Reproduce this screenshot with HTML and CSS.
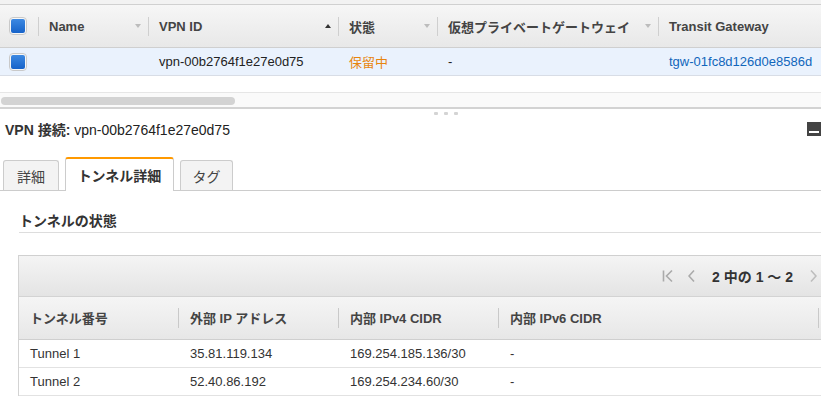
FILE: index.html
```html
<!DOCTYPE html>
<html lang="ja">
<head>
  <meta charset="UTF-8" />
  <meta name="viewport" content="width=device-width, initial-scale=1" />
  <title>VPN 接続 | トンネル詳細</title>
  <link rel="stylesheet" href="styles.css">
</head>
<body>

  <div class="topbar"></div>

  <div class="list">
    <div class="list-head">
      <div class="col col-check"><span class="cb"><span></span></span></div>
      <div class="col col-name">Name<span class="sort"></span></div>
      <div class="col col-id">VPN ID<span class="sort up"></span></div>
      <div class="col col-state">状態<span class="sort"></span></div>
      <div class="col col-vgw">仮想プライベートゲートウェイ<span class="sort"></span></div>
      <div class="col col-tgw">Transit Gateway</div>
    </div>
    <div class="list-row">
      <div class="col col-check"><span class="cb"><span></span></span></div>
      <div class="col col-name"></div>
      <div class="col col-id">vpn-00b2764f1e27e0d75</div>
      <div class="col col-state pending">保留中</div>
      <div class="col col-vgw">-</div>
      <div class="col col-tgw"><a href="#" class="link">tgw-01fc8d126d0e8586d</a></div>
    </div>
    <div class="list-gap"></div>
    <div class="hscroll"><div class="thumb"></div></div>
  </div>

  <div class="splitter"><span></span><span></span><span></span></div>

  <div class="detail-head">
    <span><b>VPN 接続:</b> vpn-00b2764f1e27e0d75</span>
    <svg class="max-icon" width="14" height="14" viewBox="0 0 14 14">
      <rect width="14" height="14" fill="#444" />
      <rect x="2" y="9" width="10" height="2" fill="#fff" />
    </svg>
  </div>

  <div class="tabs">
    <div class="tab tab-1">詳細</div>
    <div class="tab tab-2 active">トンネル詳細</div>
    <div class="tab tab-3">タグ</div>
  </div>

  <section class="tunnels">
    <h2>トンネルの状態</h2>

    <div class="tbl">
      <div class="pager">
        <svg class="pg-first" width="11" height="14" viewBox="0 0 11 14">
          <path d="M1.5 1.5v11M10 1.5 4.5 7 10 12.5" fill="none" stroke="#aaaaaa" stroke-width="1.6" />
        </svg>
        <svg class="pg-prev" width="7" height="14" viewBox="0 0 7 14">
          <path d="M6 1.5 1 7l5 5.5" fill="none" stroke="#aaaaaa" stroke-width="1.6" />
        </svg>
        <span class="pg-text">2 中の 1 〜 2</span>
        <svg class="pg-next" width="7" height="14" viewBox="0 0 7 14">
          <path d="M1 1.5 6 7l-5 5.5" fill="none" stroke="#bdbdbd" stroke-width="1.6" />
        </svg>
      </div>

      <table>
        <colgroup>
          <col class="w160"><col class="w160"><col class="w160"><col class="w320"><col>
        </colgroup>
        <thead>
          <tr>
            <th>トンネル番号</th>
            <th>外部 IP アドレス</th>
            <th>内部 IPv4 CIDR</th>
            <th>内部 IPv6 CIDR</th>
            <th class="last"></th>
          </tr>
        </thead>
        <tbody>
          <tr>
            <td>Tunnel 1</td>
            <td>35.81.119.134</td>
            <td>169.254.185.136/30</td>
            <td>-</td>
            <td></td>
          </tr>
          <tr>
            <td>Tunnel 2</td>
            <td>52.40.86.192</td>
            <td>169.254.234.60/30</td>
            <td>-</td>
            <td></td>
          </tr>
        </tbody>
      </table>
    </div>
  </section>

</body>
</html>
```

FILE: styles.css
```css
* {
  box-sizing: border-box;
  margin: 0;
  padding: 0;
}

body {
  font-family: "Liberation Sans", "Noto Sans CJK JP", sans-serif;
  font-size: 13px;
  color: #333;
  background: #fff;
  width: 821px;
  height: 398px;
  overflow: hidden;
}

.topbar {
  height: 4px;
  background: #f2f2f2;
}

/* list of vpn connections */
.list-head {
  display: flex;
  height: 44px;
  border-top: 1px solid #d0d0d0;
  border-bottom: 1px solid #cfcfcf;
  background: linear-gradient(#f6f6f6, #e8e8e8);
  font-weight: bold;
  color: #444;
}

.col {
  display: flex;
  align-items: center;
  flex: none;
  white-space: nowrap;
  padding: 0 7px 0 11px;
  background: linear-gradient(#cfcfcf, #cfcfcf) no-repeat left center / 1px 19px;
}

.col-check {
  width: 38px;
  padding: 0 0 0 9px;
  background: none;
}
.col-name { width: 110px; }
.col-id { width: 190px; }
.col-state { width: 99px; }
.col-vgw { width: 221px; }
.col-tgw { flex: 1; }

.sort {
  margin-left: auto;
  width: 0;
  height: 0;
  border-left: 3.5px solid transparent;
  border-right: 3.5px solid transparent;
  border-top: 4px solid #bcbcbc;
}
.sort.up {
  border-top: 0;
  border-bottom: 4px solid #333;
}

.cb {
  display: flex;
  align-items: center;
  justify-content: center;
  width: 18px;
  height: 18px;
  border: 1px solid #c9c9c9;
  border-radius: 4px;
  background: #f7f7f7;
}
.cb span {
  width: 14px;
  height: 14px;
  border-radius: 2px;
  background: linear-gradient(#3d89e2, #1763c9);
}

.list-row {
  display: flex;
  height: 28px;
  background: #eaf2fd;
  border-bottom: 1px solid #d8dde6;
  color: #222;
}
.list-row .col {
  background: none;
}

.pending {
  color: #e8850e;
}

.link {
  color: #1166bb;
  text-decoration: none;
}

.list-gap {
  height: 16px;
}

.hscroll {
  height: 17px;
  padding: 4px 0 0 1px;
  background: #fafafa;
  border-top: 1px solid #e6e6e6;
  border-bottom: 2px solid #d3d3d3;
}
.hscroll .thumb {
  width: 234px;
  height: 8px;
  border-radius: 4px;
  background: #d3d3d3;
}

/* detail pane */
.splitter {
  display: flex;
  gap: 6px;
  height: 9px;
  padding: 3px 0 0 434px;
}
.splitter span {
  width: 4px;
  height: 3px;
  border-radius: 1px;
  background: #d4d4d4;
}

.detail-head {
  display: flex;
  align-items: center;
  justify-content: space-between;
  height: 22px;
  padding-left: 5px;
  font-size: 14px;
  color: #222;
}
.detail-head b {
  color: #333;
}

.tabs {
  display: flex;
  align-items: flex-end;
  gap: 6px;
  height: 34px;
  margin-top: 17px;
  padding-left: 3px;
  border-bottom: 1px solid #cccccc;
}

.tab {
  display: flex;
  align-items: center;
  justify-content: center;
  height: 30px;
  border: 1px solid #cccccc;
  border-bottom: 0;
  border-radius: 3px 3px 0 0;
  background: #f3f3f3;
  font-size: 14px;
  color: #444;
}
.tab-1 { width: 56px; }
.tab-2 { width: 109px; }
.tab-3 { width: 53px; }

.tab.active {
  height: 34px;
  margin-bottom: -1px;
  background: #fff;
  border-top: 2px solid #ff9900;
  font-weight: bold;
  color: #333;
}

.tunnels {
  padding-left: 18px;
}

.tunnels h2 {
  margin: 20px 0 0 1px;
  padding-bottom: 1px;
  font-size: 14px;
  line-height: 20px;
  color: #333;
  border-bottom: 1px solid #dddddd;
}

.tbl {
  margin: 22px -14px 0 0;
  border-left: 1px solid #d3d3d3;
  border-top: 1px solid #d0d0d0;
}

.pager {
  display: flex;
  align-items: center;
  justify-content: flex-end;
  height: 41px;
  padding-right: 18px;
  background: linear-gradient(#f4f4f4, #e4e4e4);
  border-bottom: 1px solid #d3d3d3;
}
.pg-prev {
  margin-left: 15px;
}
.pg-text {
  margin: 0 17px;
  font-size: 14px;
  font-weight: bold;
  color: #333;
}

table {
  width: 100%;
  border-collapse: collapse;
  table-layout: fixed;
}
.w160 { width: 160px; }
.w320 { width: 320px; }

th {
  height: 42px;
  padding-left: 11px;
  text-align: left;
  white-space: nowrap;
  font-weight: bold;
  color: #444;
  border-bottom: 1px solid #cfcfcf;
  background:
    linear-gradient(#c9c9c9, #c9c9c9) no-repeat right center / 1px 20px,
    linear-gradient(#f5f5f5, #e7e7e7);
}
th.last {
  background: linear-gradient(#f5f5f5, #e7e7e7);
}

td {
  height: 28px;
  padding-left: 11px;
  white-space: nowrap;
  color: #333;
  border-bottom: 1px solid #e2e2e2;
}
```
